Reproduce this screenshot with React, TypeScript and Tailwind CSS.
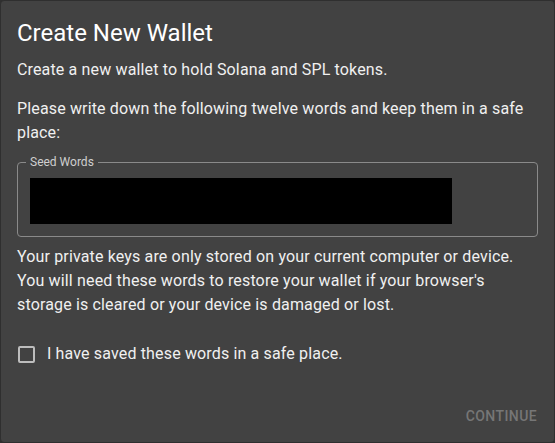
export default function App() {
  return (
    <div className="w-[555px] h-[443px] bg-[#303030]" style={{ fontFamily: "Roboto, 'Liberation Sans', sans-serif" }}>
      <div className="w-full h-full flex flex-col bg-[#424242] border border-[#2f2f2f] rounded-[4px] text-[#f0f0f0]">
        <h2 className="px-[16px] pt-[16px] text-[24px] leading-[32px] font-normal text-white">Create New Wallet</h2>
        <div className="px-[16px] flex flex-col text-[16px] leading-[24px] tracking-[0.15px]">
          <p className="mt-[9px]">Create a new wallet to hold Solana and SPL tokens.</p>
          <p className="mt-[15px]">Please write down the following twelve words and keep them in a safe place:</p>
          <div className="mt-[17px] h-[75px] border border-[#8a8a8a] rounded-[4px] px-[12px] pt-[15px] relative">
            <span className="absolute left-[8px] -top-[8px] px-[4px] bg-[#424242] text-[12px] leading-[14px] tracking-normal text-[#cfcfcf]">
              Seed Words
            </span>
            <div className="w-[422px] h-[46px] bg-black" />
          </div>
          <p className="mt-[8px]">
            Your private keys are only stored on your current computer or device.
            <br />
            You will need these words to restore your wallet if your browser's
            <br />
            storage is cleared or your device is damaged or lost.
          </p>
          <label className="mt-[25px] flex items-center gap-[12px] pl-[1px]">
            <span className="w-[17px] h-[17px] border-2 border-[#bdbdbd] rounded-[2px]" />
            <span>I have saved these words in a safe place.</span>
          </label>
        </div>
        <div className="mt-auto flex justify-end px-[17px] pb-[15px]">
          <button className="text-[14px] font-medium tracking-[0.4px] text-[#767676]">CONTINUE</button>
        </div>
      </div>
    </div>
  );
}
